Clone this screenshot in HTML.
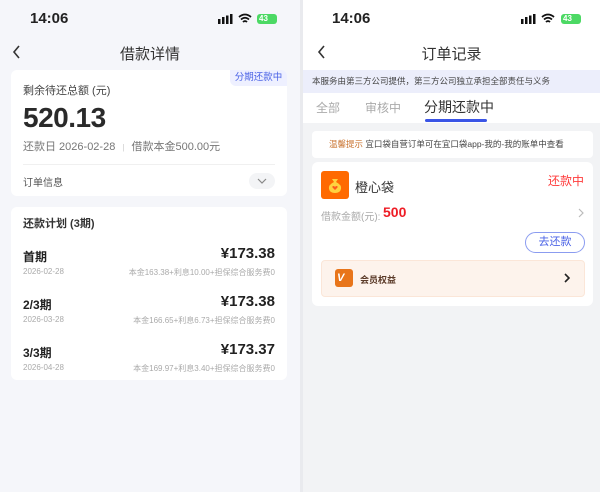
<!DOCTYPE html>
<html><head><meta charset="utf-8"><style>
*{margin:0;padding:0;box-sizing:border-box}
body{width:600px;height:492px;overflow:hidden;font-family:"Liberation Sans","Noto Sans CJK SC",sans-serif;background:#e9eaee;position:relative;color:#222}
.a{position:absolute;white-space:nowrap}
#L{position:absolute;left:0;top:0;width:300px;height:492px;background:#f5f6fa}
#R{position:absolute;left:303px;top:0;width:297px;height:492px;background:#f2f3f5}
.card{position:absolute;background:#fff;border-radius:6px}
</style></head><body>
<div id="L">
<div class="a" style="left:30px;top:10px;font-size:15px;font-weight:bold">14:06</div>
<svg class="a" style="left:218px;top:14px" width="16" height="10"><rect x="0" y="5" width="2.5" height="5" fill="#111"/><rect x="4" y="3" width="2.5" height="7" fill="#111"/><rect x="8" y="1.5" width="2.5" height="8.5" fill="#111"/><rect x="12" y="0" width="2.5" height="10" fill="#111"/></svg>
<svg class="a" style="left:238px;top:13px" width="14" height="11" viewBox="0 0 14 11"><path d="M1 4Q7-1 13 4M3 6.5Q7 3 11 6.5M5 9Q7 7 9 9" stroke="#111" stroke-width="1.8" fill="none"/></svg>
<div class="a" style="left:257px;top:14px;width:20px;height:10px;background:#4cd964;border-radius:3px;font-size:8px;color:#fff;font-weight:bold;padding-left:2px;line-height:10px">43</div>
<svg class="a" style="left:12px;top:45px" width="10" height="14"><path d="M7 1L2 7L7 13" stroke="#333" stroke-width="1.6" fill="none"/></svg>
<div class="a" style="left:0;width:300px;text-align:center;top:43px;font-size:15px;color:#333">借款详情</div>
<div class="card" style="left:11px;top:70px;width:276px;height:126px">
<div class="a" style="right:0;top:0;width:57px;height:16px;background:#eef0ff;color:#4b63e6;font-size:9.5px;text-align:center;line-height:16px;border-radius:0 6px 0 6px">分期还款中</div>
<div class="a" style="left:12px;top:12px;font-size:11px;color:#444">剩余待还总额 (元)</div>
<div class="a" style="left:12px;top:32px;font-size:28px;font-weight:bold;color:#2a2a2a;letter-spacing:-0.5px">520.13</div>
<div class="a" style="left:12px;top:68px;font-size:11px;color:#777">还款日 2026-02-28 <span style="color:#ccc;font-size:8px;margin:0 4px">|</span> 借款本金500.00元</div>
<div class="a" style="left:12px;top:94px;width:252px;height:1px;background:#f0f0f0"></div>
<div class="a" style="left:12px;top:104px;font-size:10px;color:#555">订单信息</div>
<div class="a" style="left:238px;top:103px;width:26px;height:16px;border-radius:8px;background:#f3f4f6"></div>
<svg class="a" style="left:246px;top:108px" width="10" height="6"><path d="M1 1L5 5L9 1" stroke="#888" stroke-width="1.2" fill="none"/></svg>
</div>
<div class="card" style="left:11px;top:207px;width:276px;height:173px">
<div class="a" style="left:12px;top:8px;font-size:11px;font-weight:bold;color:#333">还款计划 (3期)</div>
<div class="a" style="left:12px;top:41px;font-size:12px;font-weight:bold">首期</div>
<div class="a" style="right:12px;top:38px;font-size:15px;font-weight:bold">¥173.38</div>
<div class="a" style="left:12px;top:60px;font-size:8px;color:#aaa">2026-02-28</div>
<div class="a" style="right:12px;top:60px;font-size:8px;color:#aaa">本金163.38+利息10.00+担保综合服务费0</div>
<div class="a" style="left:12px;top:89px;font-size:12px;font-weight:bold">2/3期</div>
<div class="a" style="right:12px;top:86px;font-size:15px;font-weight:bold">¥173.38</div>
<div class="a" style="left:12px;top:108px;font-size:8px;color:#aaa">2026-03-28</div>
<div class="a" style="right:12px;top:108px;font-size:8px;color:#aaa">本金166.65+利息6.73+担保综合服务费0</div>
<div class="a" style="left:12px;top:137px;font-size:12px;font-weight:bold">3/3期</div>
<div class="a" style="right:12px;top:134px;font-size:15px;font-weight:bold">¥173.37</div>
<div class="a" style="left:12px;top:156px;font-size:8px;color:#aaa">2026-04-28</div>
<div class="a" style="right:12px;top:156px;font-size:8px;color:#aaa">本金169.97+利息3.40+担保综合服务费0</div>
</div>
</div>
<div id="R">
<div style="position:absolute;left:0;top:0;width:297px;height:123px;background:#fff"></div>
<div class="a" style="left:29px;top:10px;font-size:15px;font-weight:bold">14:06</div>
<svg class="a" style="left:218px;top:14px" width="16" height="10"><rect x="0" y="5" width="2.5" height="5" fill="#111"/><rect x="4" y="3" width="2.5" height="7" fill="#111"/><rect x="8" y="1.5" width="2.5" height="8.5" fill="#111"/><rect x="12" y="0" width="2.5" height="10" fill="#111"/></svg>
<svg class="a" style="left:238px;top:13px" width="14" height="11" viewBox="0 0 14 11"><path d="M1 4Q7-1 13 4M3 6.5Q7 3 11 6.5M5 9Q7 7 9 9" stroke="#111" stroke-width="1.8" fill="none"/></svg>
<div class="a" style="left:258px;top:14px;width:20px;height:10px;background:#4cd964;border-radius:3px;font-size:8px;color:#fff;font-weight:bold;padding-left:2px;line-height:10px">43</div>
<svg class="a" style="left:14px;top:45px" width="10" height="14"><path d="M7 1L2 7L7 13" stroke="#333" stroke-width="1.6" fill="none"/></svg>
<div class="a" style="left:0;width:297px;text-align:center;top:43px;font-size:15px;color:#333">订单记录</div>
<div class="a" style="left:0;top:70px;width:297px;height:23px;background:#eceefb;font-size:8.5px;color:#444;line-height:23px;padding-left:9px">本服务由第三方公司提供，第三方公司独立承担全部责任与义务</div>
<div class="a" style="left:13px;top:99px;font-size:12px;color:#aaa">全部</div>
<div class="a" style="left:62px;top:99px;font-size:12px;color:#aaa">审核中</div>
<div class="a" style="left:121px;top:97px;font-size:14px;color:#333">分期还款中</div>
<div class="a" style="left:122px;top:119px;width:62px;height:3px;background:#3b55e6;border-radius:2px"></div>
<div class="card" style="left:9px;top:131px;width:281px;height:27px;border-radius:4px;font-size:8.5px;color:#444;line-height:27px;padding-left:17px"><span style="color:#c8712c">温馨提示</span> 宜口袋自营订单可在宜口袋app-我的-我的账单中查看</div>
<div class="card" style="left:9px;top:162px;width:281px;height:144px">
<div class="a" style="left:9px;top:9px;width:28px;height:28px;background:#ff6a00;border-radius:3px"></div>
<svg class="a" style="left:14px;top:14px" width="18" height="18"><path d="M6 3L12 3L10 6Q16 9 15 13Q14 17 9 17Q4 17 3 13Q2 9 8 6Z" fill="#ffd23f"/><path d="M9 14L6.5 11.5Q6 10 7.5 10Q8.5 10 9 11Q9.5 10 10.5 10Q12 10 11.5 11.5Z" fill="#ff5a1f"/></svg>
<div class="a" style="left:43px;top:15px;font-size:13px;color:#333">橙心袋</div>
<div class="a" style="right:9px;top:10px;font-size:12px;color:#ff3b3b">还款中</div>
<div class="a" style="left:9px;top:46px;font-size:10px;color:#aaa">借款金额(元):</div>
<div class="a" style="left:71px;top:42px;font-size:14px;font-weight:bold;color:#ee1c25">500</div>
<svg class="a" style="left:266px;top:46px" width="6" height="10"><path d="M1 1L5 5L1 9" stroke="#bbb" stroke-width="1.2" fill="none"/></svg>
<div class="a" style="left:213px;top:70px;width:60px;height:21px;border:1px solid #8b9cf0;border-radius:11px;color:#4b63e6;font-size:11px;text-align:center;line-height:19px">去还款</div>
<div class="a" style="left:9px;top:98px;width:264px;height:37px;background:#fdf3ec;border:1px solid #fbe6d8;border-radius:4px"></div>
<div class="a" style="left:23px;top:107px;width:18px;height:18px;background:#e8751a;border-radius:3px;color:#fff;font-size:11px;font-weight:bold;font-style:italic;line-height:18px;padding-left:2px">V</div>
<div class="a" style="left:48px;top:111px;font-size:9px;font-weight:bold;color:#5a3a28">会员权益</div>
<svg class="a" style="left:252px;top:111px" width="6" height="10"><path d="M1 1L5 5L1 9" stroke="#222" stroke-width="1.6" fill="none"/></svg>
</div>
</div>
</body></html>
